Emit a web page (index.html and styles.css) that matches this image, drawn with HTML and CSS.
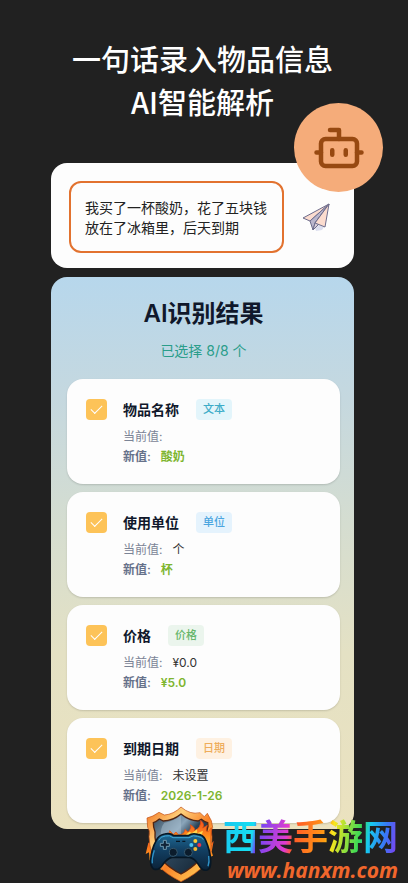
FILE: index.html
```html
<!DOCTYPE html>
<html lang="zh-CN">
<head>
    <meta charset="UTF-8">
    <meta name="viewport" content="width=device-width, initial-scale=1.0">
    <title>一句话录入物品信息</title>
    <link rel="stylesheet" href="styles.css">
</head>
<body>
    <h1 class="headline">一句话录入物品信息<br>AI智能解析</h1>

    <main class="content">
        <form class="composer">
            <textarea class="composer-input" aria-label="物品描述" rows="2">我买了一杯酸奶，花了五块钱
放在了冰箱里，后天到期</textarea>
            <button class="send" type="button" aria-label="发送">
                <svg width="28" height="28" viewBox="0 0 28 28" stroke="#6d6c8c" stroke-width="1" stroke-linejoin="round">
                    <path d="M13 25l4-3 5 2-2 3-6 1z" fill="#dcdeee" stroke="none"/>
                    <path d="M27 1L1 15l7 3z" fill="#fbdccf"/>
                    <path d="M27 1L8 18l3 9 2-7z" fill="#b9b5cc"/>
                    <path d="M27 1L13 20l-2 7 5-5z" fill="#d9cdd8"/>
                    <path d="M27 1L13 20l10 4z" fill="#fbdccf"/>
                </svg>
            </button>
            <div class="bot">
                <svg width="54" height="54" viewBox="0 0 24 24" fill="none" stroke="#974911" stroke-width="2" stroke-linecap="round" stroke-linejoin="round">
                    <path d="M12 8V4H8"/>
                    <rect x="4" y="8" width="16" height="12" rx="2"/>
                    <path d="M2 14h2M20 14h2M15 13v2M9 13v2"/>
                </svg>
            </div>
        </form>

        <section class="result">
            <h2 class="result-title">AI识别结果</h2>
            <p class="result-count">已选择 8/8 个</p>

            <div class="card">
                <input class="check" type="checkbox" id="name" checked>
                <div class="card-body">
                    <div class="card-head"><label for="name">物品名称</label><span class="tag tag-text">文本</span></div>
                    <div class="row"><span>当前值:</span></div>
                    <div class="row new"><span>新值:</span><b>酸奶</b></div>
                </div>
            </div>

            <div class="card">
                <input class="check" type="checkbox" id="unit" checked>
                <div class="card-body">
                    <div class="card-head"><label for="unit">使用单位</label><span class="tag tag-unit">单位</span></div>
                    <div class="row"><span>当前值:</span><b>个</b></div>
                    <div class="row new"><span>新值:</span><b>杯</b></div>
                </div>
            </div>

            <div class="card">
                <input class="check" type="checkbox" id="price" checked>
                <div class="card-body">
                    <div class="card-head"><label for="price">价格</label><span class="tag tag-price">价格</span></div>
                    <div class="row"><span>当前值:</span><b>¥0.0</b></div>
                    <div class="row new"><span>新值:</span><b>¥5.0</b></div>
                </div>
            </div>

            <div class="card">
                <input class="check" type="checkbox" id="expiry" checked>
                <div class="card-body">
                    <div class="card-head"><label for="expiry">到期日期</label><span class="tag tag-date">日期</span></div>
                    <div class="row"><span>当前值:</span><b>未设置</b></div>
                    <div class="row new"><span>新值:</span><b>2026-1-26</b></div>
                </div>
            </div>
        </section>
    </main>

    <div class="watermark">
        <svg width="80" height="83" viewBox="0 0 240 249">
            <defs>
                <linearGradient id="rim" x1="0" y1="0" x2="1" y2="1">
                    <stop offset="0" stop-color="#f0701c"/>
                    <stop offset=".3" stop-color="#ffcf7a"/>
                    <stop offset=".55" stop-color="#f88228"/>
                    <stop offset=".8" stop-color="#ffb84a"/>
                    <stop offset="1" stop-color="#e8560f"/>
                </linearGradient>
                <linearGradient id="steel" x1="0" y1="0" x2="1" y2="1">
                    <stop offset="0" stop-color="#2f4558"/>
                    <stop offset=".35" stop-color="#8aa5ba"/>
                    <stop offset=".5" stop-color="#2c4458"/>
                    <stop offset="1" stop-color="#10202f"/>
                </linearGradient>
                <linearGradient id="flame" x1="0" y1="0" x2="0" y2="1">
                    <stop offset="0" stop-color="#f4511e"/>
                    <stop offset=".5" stop-color="#ff8a1c"/>
                    <stop offset="1" stop-color="#ffc738"/>
                </linearGradient>
                <linearGradient id="pad" x1="0" y1="0" x2="0" y2="1">
                    <stop offset="0" stop-color="#1f6c98"/>
                    <stop offset=".45" stop-color="#123f62"/>
                    <stop offset="1" stop-color="#0b2238"/>
                </linearGradient>
            </defs>
            <path d="M22 128L14 162l10-5 2 24 14-4 20 32 130-12 8-22 18-8-4-12 6-32-9 10-6-22z" fill="url(#flame)"/>
            <path d="M120 21Q98 43 70 45L54 37Q36 50 18 54L20 82Q28 91 24 110Q26 158 48 194Q74 222 120 245Q166 222 192 194Q214 158 213 110Q208 91 215 82L211 62L199 40L190 50L177 38Q147 45 120 21Z" fill="url(#rim)" stroke="#c04a10" stroke-width="2"/>
            <path d="M120 42Q96 62 67 63L55 57Q46 65 37 68L38 81Q44 94 42 112Q47 154 65 182Q86 204 120 222Q152 204 173 182Q193 154 197 112Q195 94 201 79L200 68Q191 66 181 58L171 63Q144 62 120 42Z" fill="url(#steel)" stroke="#522411" stroke-width="4"/>
            <path d="M120 46Q98 65 70 68Q56 86 60 112H120Z" fill="#a9bfd0" opacity=".5"/>
            <path d="M77 107Q85 104 86 92L97 103 105 96 113 105Q132 103 132 88L141 96Q154 82 147 74Q165 83 160 92Q180 85 179 61Q193 73 185 84L199 76Q191 97 202 95L211 83L207 151L165 118Z" fill="url(#flame)" stroke="#e04b12" stroke-width="2"/>
            <path d="M130 108L145 95 153 99 168 88 169 100 186 92 180 112Z" fill="#ffd54a"/>
            <path d="M71 102Q88 98 98 107H142Q154 98 170 103Q187 104 193 119Q208 153 209 183Q210 206 198 210Q184 214 174 196Q161 174 145 172H93Q79 175 66 193Q53 213 38 207Q28 199 29 181Q31 147 46 121Q52 106 71 102Z" fill="url(#pad)" stroke="#061725" stroke-width="5"/>
            <path d="M53 121Q58 109 73 108Q86 104 96 113H144Q157 104 169 109Q183 110 187 119" fill="none" stroke="#42a8d5" stroke-width="3"/>
            <path d="M40 151Q32 175 34 190M203 168Q206 186 201 199" fill="none" stroke="#2e93c9" stroke-width="4"/>
            <path d="M67 121h9v9h9v9h-9v9h-9v-9h-9v-9h9z" fill="#102337" stroke="#6f9bb0" stroke-width="3"/>
            <circle cx="97" cy="157" r="12" fill="#0b1c2c" stroke="#37596e" stroke-width="3"/>
            <circle cx="142" cy="157" r="12" fill="#0b1c2c" stroke="#37596e" stroke-width="3"/>
            <circle cx="163" cy="123" r="6" fill="#ffcc32"/>
            <circle cx="151" cy="135" r="6" fill="#49c4ef"/>
            <circle cx="175" cy="135" r="6" fill="#ef3347"/>
            <circle cx="163" cy="147" r="6" fill="#f6b933"/>
            <path d="M105 124h12m7 0h9" stroke="#071623" stroke-width="4"/>
        </svg>
        <div class="watermark-text">
            <span class="site-name">西美手游网</span>
            <span class="site-url">www.hanxm.com</span>
        </div>
    </div>
</body>
</html>
```
FILE: styles.css
```css
* {
    box-sizing: border-box;
}
body {
    position: relative;
    min-height: 100vh;
    margin: 0;
    padding: 37px 54px 54px 51px;
    background: #212121;
    color: #10182b;
    font-family: Inter, "Noto Sans CJK SC", sans-serif;
}
.headline {
    margin: 0 0 40px;
    color: white;
    font-family: "Noto Sans CJK SC", sans-serif;
    font-size: 29px;
    font-weight: 500;
    line-height: 43px;
    text-align: center;
    white-space: nowrap;
}
.content {
    display: flex;
    flex-direction: column;
    gap: 9px;
}
.composer {
    position: relative;
    display: flex;
    align-items: center;
    gap: 18px;
    padding: 18px 24px 15px 18px;
    background: #fdfdfd;
    border-radius: 16px;
}
.composer-input {
    flex: 1;
    min-width: 0;
    height: 72px;
    padding: 14px;
    border: 2px solid #e2722f;
    border-radius: 12px;
    background: transparent;
    color: #222;
    font-family: "Noto Sans CJK SC", sans-serif;
    font-size: 14px;
    line-height: 20px;
    resize: none;
    overflow: hidden;
}
.send {
    display: flex;
    padding: 0;
    border: none;
    background: none;
    cursor: pointer;
}
.bot {
    position: absolute;
    top: -60px;
    right: -29px;
    display: flex;
    align-items: center;
    justify-content: center;
    width: 89px;
    height: 89px;
    border-radius: 50%;
    background: #f5ac7a;
}

.result {
    display: flex;
    flex-direction: column;
    gap: 8px;
    padding: 20px 14px 6px 16px;
    border-radius: 16px;
    background: linear-gradient(#b7d7ec, #c5d8df 22%, #d5ddd0 45%, #e4e1c4 68%, #ebe2bf);
}
.result-title {
    margin: 0;
    font-size: 24px;
    font-weight: 600;
    line-height: 34px;
    text-align: center;
}
.result-count {
    margin: 0 0 8px;
    color: #2a9d8a;
    font-size: 14px;
    line-height: 24px;
    text-align: center;
}
.card {
    display: flex;
    gap: 16px;
    padding: 20px 19px 17px;
    border-radius: 16px;
    background: #fdfdfd;
    box-shadow: 0 1px 2px rgba(0, 0, 0, 0.15);
}
.check {
    appearance: none;
    flex: none;
    width: 21px;
    height: 21px;
    margin: 0;
    border-radius: 4px;
    background: #fdc358;
}
.check:checked::after {
    content: "";
    display: block;
    width: 10px;
    height: 5px;
    margin: 6px auto;
    border-left: 1px solid white;
    border-bottom: 1px solid white;
    transform: rotate(-45deg);
}
.card-head {
    display: flex;
    align-items: center;
    gap: 17px;
    margin-bottom: 7px;
    font-size: 14px;
    font-weight: 600;
    line-height: 21px;
}
.tag {
    padding: 0 7px;
    border-radius: 4px;
    font-size: 11px;
    font-weight: 500;
}
.tag-text {
    background: #e3f5fb;
    color: #3eacc8;
}
.tag-unit {
    background: #e5f3fd;
    color: #4ba5df;
}
.tag-price {
    background: #ebf5ed;
    color: #67b66b;
}
.tag-date {
    background: #fef1e2;
    color: #eead5b;
}
.row {
    display: flex;
    gap: 10px;
    color: #7b8496;
    font-size: 12px;
    line-height: 20px;
}
.row b {
    color: #333;
    font-weight: 400;
}
.new {
    color: #66718a;
    font-weight: 600;
}
.new b {
    color: #7eb52f;
    font-weight: 600;
}

.watermark {
    position: absolute;
    right: 10px;
    bottom: 0;
    display: flex;
    gap: 2px;
}
.watermark-text {
    display: flex;
    flex-direction: column;
    padding-top: 12px;
    white-space: nowrap;
}
.site-name {
    background: linear-gradient(100deg, #18c4f0, #16dff0 18%, #7047f4 21%, #e13bd0 37%, #ff5a28 41%, #ff9c12 58%, #f9e51d 62%, #38d957 77%, #16c9f0 82%, #3877f5 91%, #8c35ef);
    -webkit-background-clip: text;
    background-clip: text;
    color: transparent;
    font-family: "Noto Sans CJK SC", sans-serif;
    font-size: 35px;
    font-weight: 700;
    line-height: 46px;
}
.site-url {
    padding-left: 4px;
    color: #f1672c;
    font-family: "Open Sans", sans-serif;
    font-size: 21px;
    font-style: italic;
    font-weight: 700;
    line-height: 25px;
}
```
